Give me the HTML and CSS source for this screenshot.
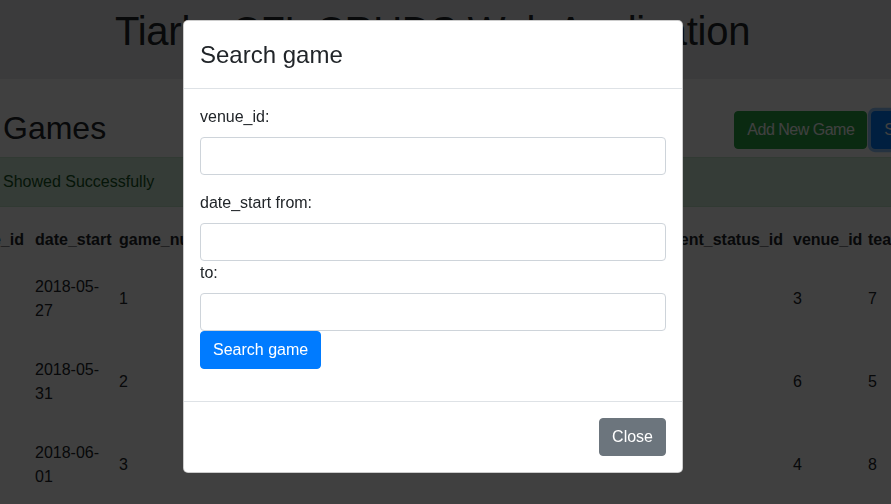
FILE: index.html
```html
<!DOCTYPE html>
<html lang="en">
<head>
<meta charset="utf-8">
<title>Games</title>
<link rel="stylesheet" href="styles.css">
</head>
<body>
<div class="page">
  <header class="jumbotron">
    <h1 class="app-title">Tiarks CFL CRUDS Web Application</h1>
  </header>
  <div class="toolbar">
    <h2 class="section-title">Games</h2>
    <div class="actions">
      <button class="btn btn-success" type="button">Add New Game</button>
      <button class="btn btn-primary is-focused" type="button">Search Game</button>
    </div>
  </div>
  <div class="alert">Showed Successfully</div>
  <table class="games">
    <colgroup>
      <col class="c-id"><col class="c-date"><col class="c-num"><col class="c-season"><col class="c-week"><col class="c-type"><col class="c-status"><col class="c-venue"><col class="c-team"><col class="c-team">
    </colgroup>
    <thead>
      <tr><th>game_id</th><th>date_start</th><th>game_number</th><th>season</th><th>week</th><th>event_type_id</th><th>event_status_id</th><th>venue_id</th><th>team_1_id</th><th>team_2_id</th></tr>
    </thead>
    <tbody>
      <tr><td>1</td><td>2018-05-<wbr>27</td><td>1</td><td>2018</td><td>1</td><td>0</td><td>4</td><td>3</td><td>7</td><td>8</td></tr>
      <tr><td>2</td><td>2018-05-<wbr>31</td><td>2</td><td>2018</td><td>1</td><td>0</td><td>4</td><td>6</td><td>5</td><td>6</td></tr>
      <tr><td>3</td><td>2018-06-<wbr>01</td><td>3</td><td>2018</td><td>1</td><td>0</td><td>4</td><td>4</td><td>8</td><td>3</td></tr>
    </tbody>
  </table>
</div>

<div class="backdrop"></div>

<div class="modal" role="dialog">
  <div class="modal-header">
    <h4 class="modal-title">Search game</h4>
  </div>
  <div class="modal-body">
    <form class="search-form">
      <div class="form-group">
        <label for="venue">venue_id:</label>
        <input id="venue" class="form-control" type="text">
      </div>
      <div class="form-group">
        <label for="from">date_start from:</label>
        <input id="from" class="form-control" type="text">
        <label for="to">to:</label>
        <input id="to" class="form-control" type="text">
        <button class="btn btn-primary btn-block-left" type="button">Search game</button>
      </div>
    </form>
  </div>
  <div class="modal-footer">
    <button class="btn btn-secondary" type="button">Close</button>
  </div>
</div>
</body>
</html>
```
FILE: styles.css
```css
html, body {
  margin: 0;
  height: 100%;
  overflow: hidden;
}
body {
  font-family: "Liberation Sans", Arial, Helvetica, sans-serif;
  font-size: 16px;
  line-height: 1.5;
  color: #212529;
  background: #fff;
}

/* page is horizontally scrolled by 46px */
.page {
  margin-left: -46px;
  width: 1042px;
}

.jumbotron {
  background: #e9ecef;
  height: 79px;
  box-sizing: border-box;
  padding: 7px 0 0 161px;
}
.app-title {
  margin: 0;
  font-size: 40px;
  font-weight: 400;
  line-height: 48px;
  letter-spacing: -0.25px;
  white-space: nowrap;
}

.toolbar {
  display: flex;
  align-items: flex-start;
  padding: 30px 0 8px 49px;
}
.section-title {
  margin: 0;
  font-size: 32px;
  font-weight: 400;
  line-height: 38px;
}
.actions {
  margin-left: auto;
  margin-top: 2px;
  display: flex;
  gap: 4px;
}

.btn {
  font-family: inherit;
  font-size: 16px;
  line-height: 24px;
  padding: 6px 12px;
  border: 1px solid transparent;
  border-radius: 4px;
  color: #fff;
  cursor: pointer;
  white-space: nowrap;
}
.btn-success { background: #28a745; border-color: #28a745; letter-spacing: -0.5px; }
.btn-primary { background: #007bff; border-color: #007bff; }
.btn-secondary { background: #6c757d; border-color: #6c757d; }
.is-focused { box-shadow: 0 0 0 3.2px rgba(38, 143, 255, 0.5); }

.alert {
  background: #d4edda;
  border: 1px solid #c3e6cb;
  color: #155724;
  padding: 12px 20px 12px 48px;
  margin-bottom: 16px;
}

.games {
  border-collapse: collapse;
  table-layout: fixed;
  width: 1129px;
}
.c-id { width: 76px; }
.c-date { width: 84px; }
.c-num { width: 130px; }
.c-season { width: 110px; }
.c-week { width: 80px; }
.c-type { width: 223px; }
.c-status { width: 131px; }
.c-venue { width: 75px; }
.c-team { width: 110px; }
.games th,
.games td {
  padding: 5px;
  text-align: left;
}
.games th {
  font-weight: 700;
  vertical-align: bottom;
  white-space: nowrap;
}
.games td {
  vertical-align: middle;
}
.games tbody tr {
  height: 83px;
}

.backdrop {
  position: fixed;
  inset: 0;
  background: rgba(0, 0, 0, 0.75);
}

.modal {
  position: fixed;
  top: 20px;
  left: 183px;
  width: 500px;
  box-sizing: border-box;
  background: #fff;
  border: 1px solid rgba(0, 0, 0, 0.2);
  border-radius: 5px;
}
.modal-header {
  padding: 16px;
  border-bottom: 1px solid #dee2e6;
}
.modal-title {
  margin: 0;
  font-size: 24px;
  font-weight: 400;
  line-height: 35px;
}
.modal-body {
  padding: 16px;
}
.search-form { margin: 0; }
.form-group {
  margin-bottom: 16px;
}
.form-group label {
  display: block;
  margin-bottom: 8px;
}
.form-control {
  display: block;
  width: 100%;
  height: 38px;
  box-sizing: border-box;
  margin: 0;
  padding: 6px 12px;
  font-family: inherit;
  font-size: 16px;
  border: 1px solid #ced4da;
  border-radius: 4px;
  background: #fff;
}
.btn-block-left {
  display: block;
}
.modal-footer {
  display: flex;
  justify-content: flex-end;
  padding: 16px;
  border-top: 1px solid #dee2e6;
}
```
